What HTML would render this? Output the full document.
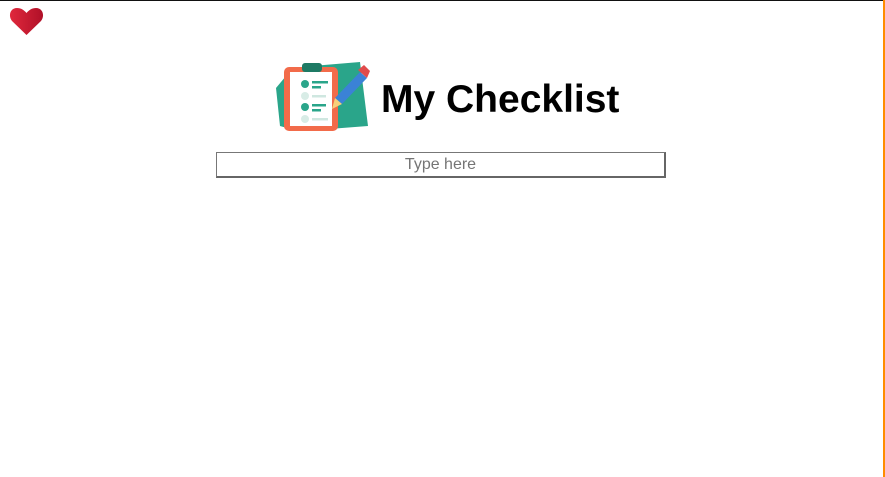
<!DOCTYPE html>
<html><head><meta charset="utf-8"><style>
html,body{margin:0;padding:0;background:#fff;}
body{width:885px;height:477px;position:relative;overflow:hidden;font-family:"Liberation Sans",sans-serif;}
.top{position:absolute;left:0;top:0;width:884px;height:1px;background:#111;}
.right{position:absolute;left:883px;top:0;width:2px;height:477px;background:#ff8c00;}
.title{position:absolute;left:381px;top:78px;font-size:39px;font-weight:bold;color:#000;font-family:"Liberation Sans",sans-serif;}
.inp{position:absolute;left:216px;top:152px;width:447px;height:23px;border:1px solid #777;border-right:2px solid #666;border-bottom:2px solid #666;text-align:center;font-size:16px;line-height:23px;color:#757575;}
</style></head><body>
<div class="top"></div><div class="right"></div>
<svg style="position:absolute;left:9px;top:7px" width="35" height="29" viewBox="0 0 35 29">
<defs><linearGradient id="g" x1="0" x2="1"><stop offset="0" stop-color="#e0283c"/><stop offset="1" stop-color="#b01028"/></linearGradient></defs>
<path d="M17.5 28 L3 14 C-1 9 1 1 8 1 C12 1 15 3 17.5 6 C20 3 23 1 27 1 C34 1 36 9 32 14 Z" fill="url(#g)"/>
</svg>
<svg style="position:absolute;left:272px;top:60px" width="100" height="72" viewBox="0 0 100 72">
<path d="M40 6 L88 2 L96 66 L44 70 Z" fill="#2aa58a"/>
<path d="M4 28 L14 16 L22 70 L8 66 Z" fill="#2aa58a"/>
<rect x="12" y="7" width="54" height="64" rx="5" fill="#f26b4a"/>
<rect x="18" y="12" width="42" height="54" fill="#fff"/>
<rect x="30" y="3" width="20" height="9" rx="3" fill="#1e7a64"/>
<circle cx="33" cy="24" r="4" fill="#2aa58a"/><rect x="40" y="21" width="16" height="2.5" fill="#2aa58a"/><rect x="40" y="26" width="9" height="2.5" fill="#2aa58a"/>
<circle cx="33" cy="36" r="4" fill="#d8ece6"/><rect x="40" y="35" width="14" height="2.5" fill="#cfe7e0"/>
<circle cx="33" cy="47" r="4" fill="#2aa58a"/><rect x="40" y="44" width="14" height="2.5" fill="#2aa58a"/><rect x="40" y="49" width="9" height="2.5" fill="#2aa58a"/>
<circle cx="33" cy="59" r="4" fill="#d8ece6"/><rect x="40" y="58" width="16" height="2.5" fill="#cfe7e0"/>
<path d="M88 12 L95 18 L70 44 L63 38 Z" fill="#3b82d6"/>
<path d="M86 10 L92 5 L98 11 L95 18 Z" fill="#e04b4b"/>
<path d="M63 38 L70 44 L60 49 Z" fill="#f7d07a"/>
</svg>
<div class="title">My Checklist</div>
<div class="inp">Type here</div>
</body></html>
